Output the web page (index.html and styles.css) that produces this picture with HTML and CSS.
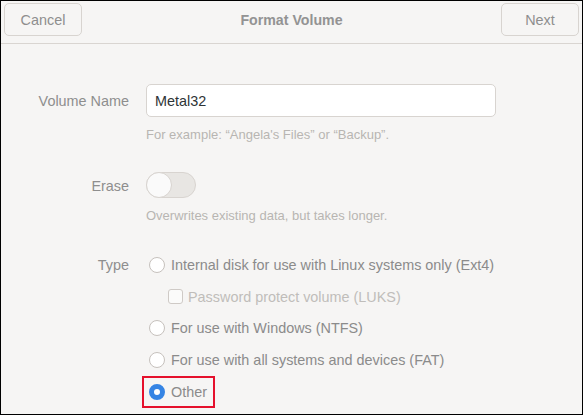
FILE: index.html
```html
<!DOCTYPE html>
<html>
<head>
<meta charset="utf-8">
<link rel="stylesheet" href="styles.css">
</head>
<body>
<div class="window">
  <header class="header">
    <button class="btn">Cancel</button>
    <div class="title">Format Volume</div>
    <button class="btn">Next</button>
  </header>
  <main class="form">
    <div class="row row-name">
      <div class="label">Volume Name</div>
      <div class="input">Metal32</div>
    </div>
    <div class="row hint-row">
      <div class="label"></div>
      <div class="hint">For example: “Angela's Files” or “Backup”.</div>
    </div>
    <div class="row row-erase">
      <div class="label">Erase</div>
      <div class="switch"><span class="knob"></span></div>
    </div>
    <div class="row hint-row">
      <div class="label"></div>
      <div class="hint">Overwrites existing data, but takes longer.</div>
    </div>
    <div class="row opt-row first">
      <div class="label">Type</div>
      <div class="option"><span class="radio"></span><span>Internal disk for use with Linux systems only (Ext4)</span></div>
    </div>
    <div class="row opt-row">
      <div class="label"></div>
      <div class="option sub disabled"><span class="check"></span><span>Password protect volume (LUKS)</span></div>
    </div>
    <div class="row opt-row">
      <div class="label"></div>
      <div class="option"><span class="radio"></span><span>For use with Windows (NTFS)</span></div>
    </div>
    <div class="row opt-row">
      <div class="label"></div>
      <div class="option"><span class="radio"></span><span>For use with all systems and devices (FAT)</span></div>
    </div>
    <div class="row opt-row">
      <div class="label"></div>
      <div class="option highlight"><span class="radio on"></span><span>Other</span></div>
    </div>
  </main>
</div>
</body>
</html>
```

FILE: styles.css
```css
* { box-sizing: border-box; }
html, body { margin: 0; padding: 0; }
body {
  font-family: "Liberation Sans", Arial, sans-serif;
  font-size: 14.4px;
  color: #8b8b8b;
}
.window {
  width: 583px;
  height: 415px;
  border: 1px solid #000;
  background: #f6f5f4;
  overflow: hidden;
}
.header {
  height: 43px;
  border-bottom: 1px solid #d9d5d1;
  display: flex;
  align-items: flex-start;
  justify-content: space-between;
  padding: 2px 3px 0 3px;
}
.btn {
  width: 78px;
  height: 33px;
  border: 1px solid #d8d4d0;
  border-radius: 5px;
  background: #f6f5f4;
  font-family: inherit;
  font-size: 14.4px;
  color: #8e8e8e;
  padding: 1px 0 0 0;
}
.title {
  font-weight: bold;
  color: #939393;
  line-height: 35px;
  font-size: 14.2px;
}
.form {
  display: flex;
  flex-direction: column;
  padding-top: 40px;
}
.row {
  display: flex;
  align-items: center;
  column-gap: 17px;
}
.label {
  width: 128px;
  flex: none;
  text-align: right;
  color: #8e8e8e;
}
.row-name .label { padding-top: 1px; }
.input {
  width: 350px;
  height: 33px;
  border: 1px solid #d8d4d0;
  border-radius: 5px;
  background: #fff;
  color: #2e3436;
  padding: 1px 8px 0 8px;
  line-height: 31px;
}
.hint-row { height: 18px; margin-top: 8px; }
.hint {
  font-size: 13px;
  color: #b8b5b2;
}
.row-erase { margin-top: 29px; }
.row-erase .label { padding-top: 1px; }
.switch {
  width: 50px;
  height: 26px;
  border: 1px solid #d8d4d0;
  border-radius: 13px;
  background: #e8e6e3;
  position: relative;
}
.knob {
  position: absolute;
  left: -1px;
  top: -1px;
  width: 26px;
  height: 26px;
  border-radius: 50%;
  background: #fafafa;
  border: 1px solid #d8d4d0;
}
.opt-row { height: 31.75px; }
.opt-row.first { margin-top: 25px; }
.option {
  display: flex;
  align-items: center;
  gap: 6px;
  margin-left: 3px;
  color: #8b8b8b;
}
.option.sub { margin-left: 22px; gap: 5px; }
.option.disabled { color: #c0bdba; }
.radio {
  width: 16px;
  height: 16px;
  border-radius: 50%;
  border: 1px solid #c6c1bd;
  background: #fff;
  flex: none;
}
.radio.on {
  border: 5px solid #3584e4;
}
.check {
  width: 15px;
  height: 15px;
  border-radius: 3px;
  border: 1px solid #cfcac6;
  background: #fbfbfa;
  flex: none;
}
.option.highlight {
  border: 2px solid #e5102c;
  margin-left: -4px;
  padding: 0 6px 0 5px;
  height: 32px;
}
```
